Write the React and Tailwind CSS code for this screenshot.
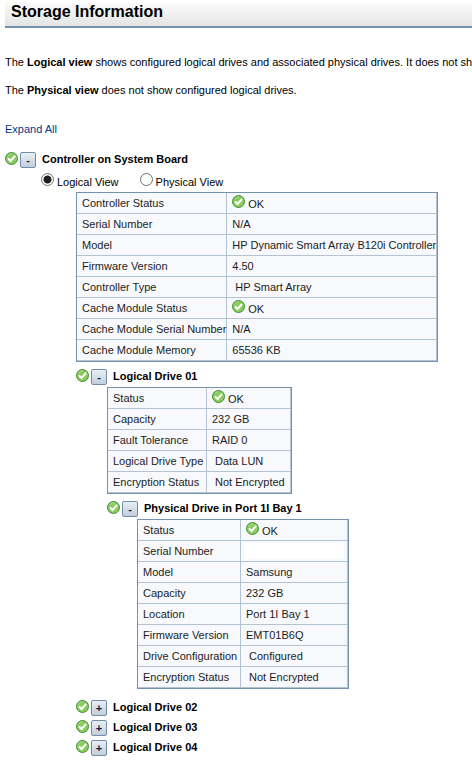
import React, { useState } from "react";

// STATUS ICON

function StatusOk() {
  return (
    <svg width="13" height="13" viewBox="0 0 13 13" role="img" aria-label="OK" className="shrink-0">
      <circle cx="6.5" cy="6.5" r="6" fill="#8ccb62" stroke="#3f8f35" strokeWidth="1" />
      <path d="M2.6 4.4C3.2 2.8 4.8 1.9 6.5 1.9" fill="none" stroke="#a9dc86" strokeWidth="1" />
      <path d="M3 6.4L5.5 9L10.2 3.8" fill="none" stroke="#ffffff" strokeWidth="2" />
    </svg>
  );
}

// TABLE OF DETAILS

function DetailTable({ rows, label, labelWidth, valueWidth }) {
  return (
    <table
      aria-label={label}
      className="border-separate border-spacing-0 border border-[#7491ad] bg-[#f7f9fc] text-[#1c1c1c]"
    >
      <tbody>
        {rows.map((row) => (
          <tr key={row.name} className="h-[21px]">
            <th
              scope="row"
              className={`${labelWidth} border-r border-b border-[#b3c3d4] py-0 pr-0 pl-[5px] text-left font-normal whitespace-nowrap`}
            >
              {row.name}
            </th>
            <td
              className={`${valueWidth} border-r border-b border-[#b3c3d4] py-0 whitespace-nowrap ${
                row.hidden ? "px-[3px]" : row.indent ? "pl-2" : "pl-[5px]"
              }`}
            >
              {row.ok && (
                <span className="flex h-5 items-start gap-[3px] pt-[2px]">
                  <StatusOk />
                  <span className="pt-[1px]">OK</span>
                </span>
              )}
              {row.hidden && <div className="h-4 bg-white"></div>}
              {row.value}
            </td>
          </tr>
        ))}
      </tbody>
    </table>
  );
}

// TREE NODE HEADING

function NodeHeading({ title, open, onToggle }) {
  return (
    <div className="flex h-5 items-start">
      <div className="flex gap-[2px] pt-[2px]">
        <StatusOk />
        <button
          type="button"
          onClick={onToggle}
          aria-expanded={open}
          aria-label={title}
          className="flex h-4 w-4 shrink-0 items-center justify-center rounded-[2px] border border-[#6f8ca8] bg-linear-to-b from-[#e9eff5] to-[#c3ced9] leading-3 font-bold text-[#0b1f4a]"
        >
          {open ? "-" : "+"}
        </button>
      </div>
      <h2 className="pt-[1px] pl-[6px] font-bold whitespace-nowrap">{title}</h2>
    </div>
  );
}

const controllerRows = [
  { name: "Controller Status", ok: true },
  { name: "Serial Number", value: "N/A" },
  { name: "Model", value: "HP Dynamic Smart Array B120i Controller" },
  { name: "Firmware Version", value: "4.50" },
  { name: "Controller Type", value: "HP Smart Array", indent: true },
  { name: "Cache Module Status", ok: true },
  { name: "Cache Module Serial Number", value: "N/A" },
  { name: "Cache Module Memory", value: "65536 KB" },
];

const logicalRows = [
  { name: "Status", ok: true },
  { name: "Capacity", value: "232 GB" },
  { name: "Fault Tolerance", value: "RAID 0" },
  { name: "Logical Drive Type", value: "Data LUN", indent: true },
  { name: "Encryption Status", value: "Not Encrypted", indent: true },
];

const physicalRows = [
  { name: "Status", ok: true },
  { name: "Serial Number", hidden: true },
  { name: "Model", value: "Samsung" },
  { name: "Capacity", value: "232 GB" },
  { name: "Location", value: "Port 1I Bay 1" },
  { name: "Firmware Version", value: "EMT01B6Q" },
  { name: "Drive Configuration", value: "Configured", indent: true },
  { name: "Encryption Status", value: "Not Encrypted", indent: true },
];

const views = ["Logical View", "Physical View"];
const otherDrives = ["Logical Drive 02", "Logical Drive 03", "Logical Drive 04"];

export default function App() {
  const [view, setView] = useState("Logical View");
  const [open, setOpen] = useState({ controller: true, logical: true, physical: true });

  const toggle = (key) => {
    setOpen({ ...open, [key]: !open[key] });
  };

  const expandAll = (e) => {
    e.preventDefault();
    const all = { controller: true, logical: true, physical: true };
    otherDrives.forEach((name) => {
      all[name] = true;
    });
    setOpen(all);
  };

  return (
    <div className="min-h-screen overflow-hidden bg-white pt-[3px] pl-[5px] font-['Liberation_Sans',Arial,sans-serif] text-[11px] leading-4 text-black">

      {/* TITLE BAR */}
      <header className="border-b-2 border-[#7491ad] bg-linear-to-b from-[#fafafa] to-[#e3e5e4] pb-[5px] pl-[6px]">
        <h1 className="text-base leading-[18px] font-bold">Storage Information</h1>
      </header>

      {/* INTRO */}
      <div className="mt-[26px] space-y-3 whitespace-nowrap">
        <p>
          The <b>Logical view</b> shows configured logical drives and associated physical drives. It does not sh
        </p>
        <p>
          The <b>Physical view</b> does not show configured logical drives.
        </p>
      </div>
      <a href="#" onClick={expandAll} className="mt-[23px] inline-block text-[#003a8c]">
        Expand All
      </a>

      {/* CONTROLLER */}
      <section className="mt-[13px]">
        <NodeHeading
          title="Controller on System Board"
          open={open.controller}
          onToggle={() => toggle("controller")}
        />

        {open.controller && (
          <>
            <div className="flex h-[22px] gap-[21px] pl-9">
              {views.map((name) => (
                <label key={name} className="flex items-start gap-[3px] pt-[3px]">
                  <input
                    type="radio"
                    name="view"
                    checked={view === name}
                    onChange={() => setView(name)}
                    className="h-[13px] w-[13px] appearance-none rounded-full border border-[#707070] bg-white checked:bg-[radial-gradient(circle,#1f1f1f_3.5px,#ffffff_4.5px)]"
                  />
                  <span className="pt-[1px]">{name}</span>
                </label>
              ))}
            </div>

            <div className="pl-[71px]">
              <DetailTable
                label="Controller"
                rows={controllerRows}
                labelWidth="min-w-[149px]"
                valueWidth="min-w-[209px]"
              />

              {/* LOGICAL DRIVE 01 */}
              <div className="mt-[5px]">
                <NodeHeading
                  title="Logical Drive 01"
                  open={open.logical}
                  onToggle={() => toggle("logical")}
                />
                {open.logical && (
                  <div className="pl-[31px]">
                    <DetailTable
                      label="Logical Drive 01"
                      rows={logicalRows}
                      labelWidth="min-w-[99px]"
                      valueWidth="min-w-[84px]"
                    />

                    {/* PHYSICAL DRIVE */}
                    <div className="mt-[5px]">
                      <NodeHeading
                        title="Physical Drive in Port 1I Bay 1"
                        open={open.physical}
                        onToggle={() => toggle("physical")}
                      />
                      {open.physical && (
                        <div className="pl-[30px]">
                          <DetailTable
                            label="Physical Drive"
                            rows={physicalRows}
                            labelWidth="min-w-[103px]"
                            valueWidth="min-w-[107px]"
                          />
                        </div>
                      )}
                    </div>
                  </div>
                )}
              </div>

              {/* OTHER DRIVES */}
              <div className="mt-[9px]">
                {otherDrives.map((name) => (
                  <NodeHeading
                    key={name}
                    title={name}
                    open={Boolean(open[name])}
                    onToggle={() => toggle(name)}
                  />
                ))}
              </div>
            </div>
          </>
        )}
      </section>
    </div>
  );
}
